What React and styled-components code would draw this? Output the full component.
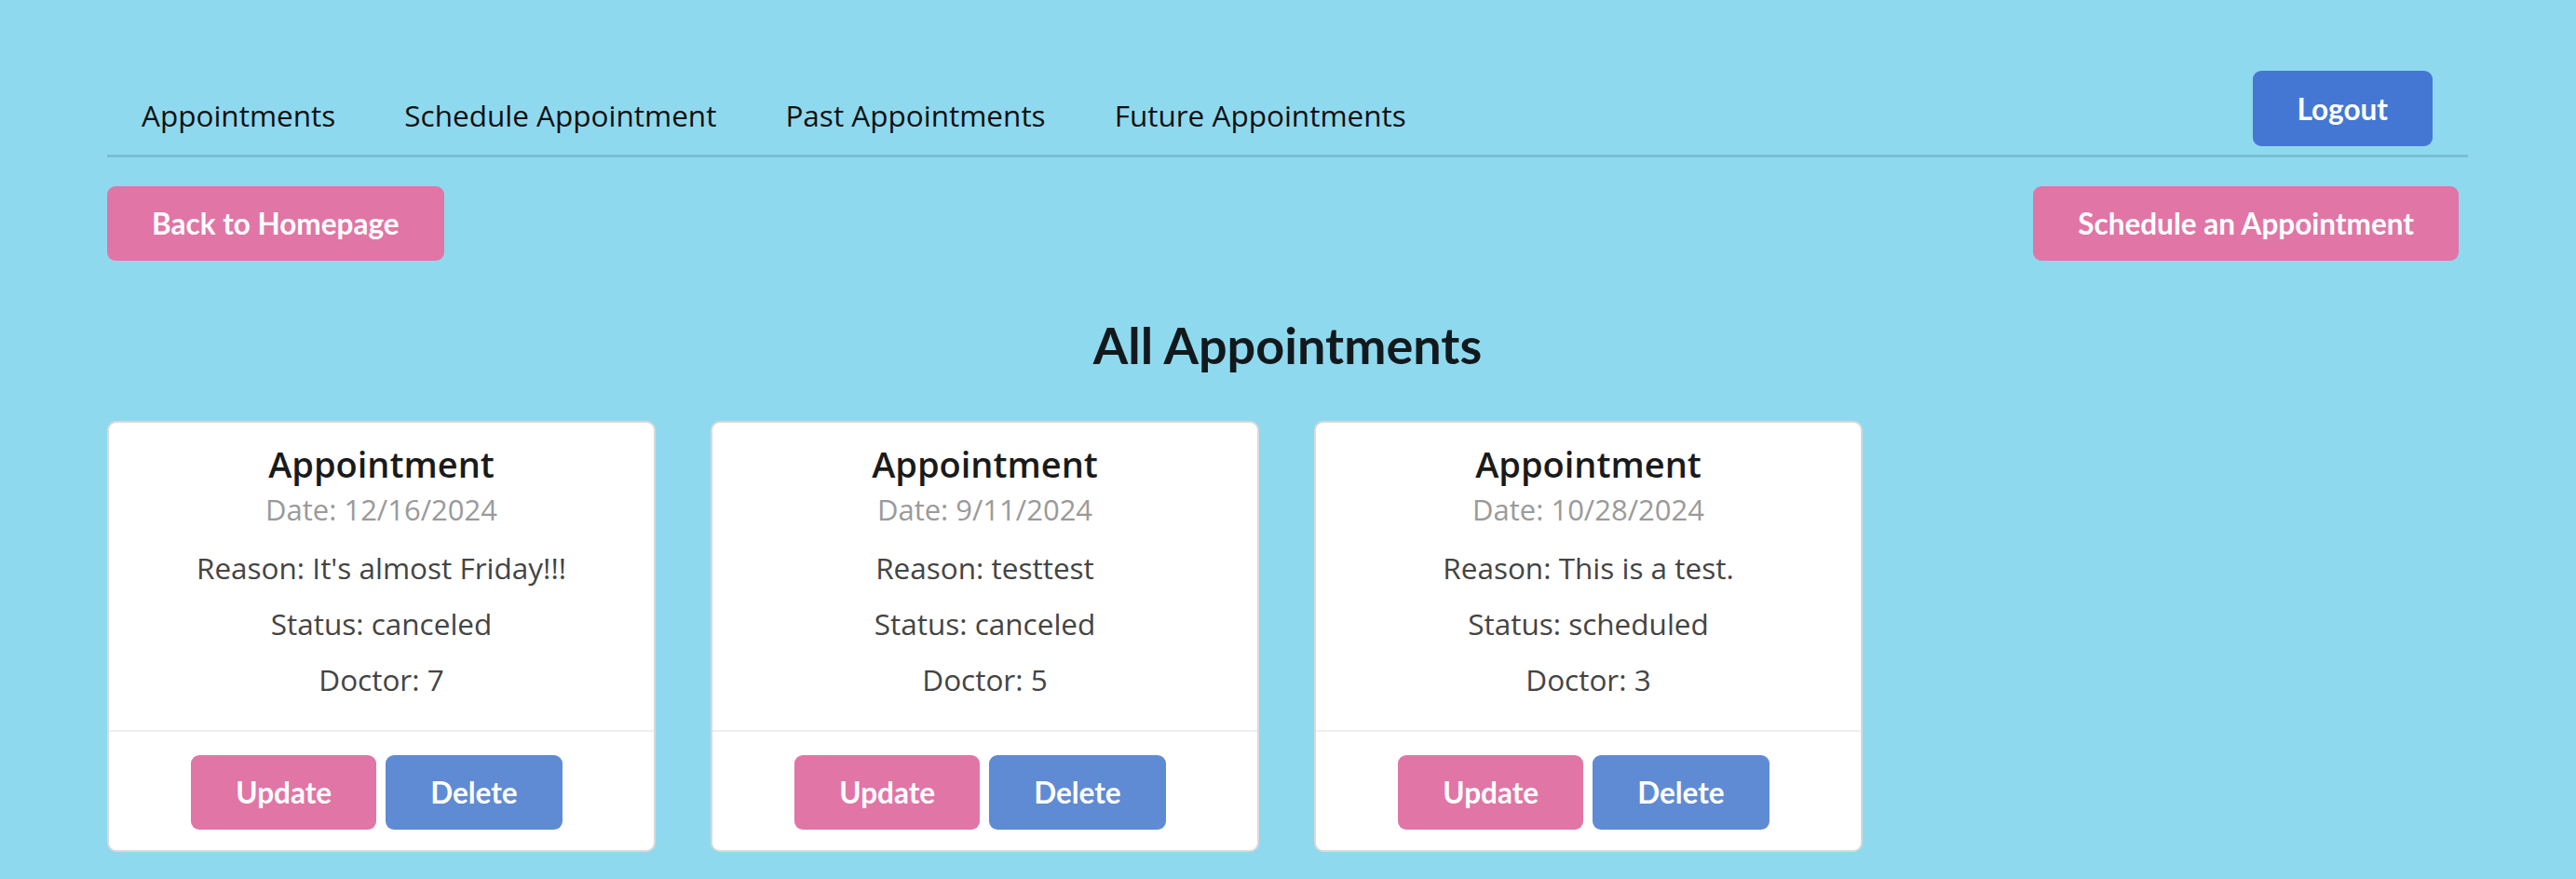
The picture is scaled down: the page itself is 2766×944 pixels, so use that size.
import React from "react";
import styled, { createGlobalStyle } from "styled-components";

const GlobalStyle = createGlobalStyle`
  html, body {
    margin: 0;
    padding: 0;
    background: #8fd9ef;
  }
  body {
    font-family: "Open Sans", "Noto Sans", sans-serif;
    color: #111;
  }
`;

const Page = styled.div`
  min-height: 944px;
  padding: 76px 116px 0 115px;
  box-sizing: border-box;
`;

const NavBar = styled.nav`
  display: flex;
  align-items: flex-end;
  justify-content: space-between;
  padding-bottom: 9px;
  border-bottom: 3px solid #78bed4;
`;

const NavLinks = styled.div`
  display: flex;
  align-items: flex-end;
`;

const NavLink = styled.a`
  font-size: 31.5px;
  line-height: 47px;
  padding: 0 37px 10px;
  color: #111;
  text-decoration: none;
  cursor: pointer;
`;

const Button = styled.button`
  height: 80px;
  padding: 0 48px;
  border: none;
  border-radius: 9px;
  font-family: "Lato", sans-serif;
  font-weight: 700;
  font-size: 31.5px;
  color: #fff;
  cursor: pointer;
  background: ${(p) =>
    p.$variant === "blue" ? "#4477d4" : p.$variant === "soft" ? "#5f8bd4" : "#e175a6"};
`;

const LogoutButton = styled(Button)`
  margin-right: 38px;
  height: 81px;
`;

const ActionRow = styled.div`
  display: flex;
  justify-content: space-between;
  margin-top: 31px;
  padding-right: 10px;
`;

const Heading = styled.h1`
  margin: 59px 0 0;
  font-family: "Lato", sans-serif;
  font-weight: 700;
  font-size: 54px;
  line-height: 1.2;
  text-align: center;
  color: #12191c;
`;

const CardList = styled.div`
  display: flex;
  gap: 59px;
  margin-top: 48px;
`;

const Card = styled.div`
  width: 589px;
  box-sizing: border-box;
  background: #fff;
  border: 2px solid #d9d9d9;
  border-radius: 10px;
  text-align: center;
`;

const CardBody = styled.div`
  padding: 18px 16px 31px;
  border-bottom: 2px solid #eeeeee;
`;

const CardTitle = styled.h2`
  margin: 0;
  font-family: "Open Sans", sans-serif;
  font-weight: 600;
  font-size: 38px;
  line-height: 52px;
  color: #1a1a1a;
`;

const DateLine = styled.div`
  font-size: 31px;
  line-height: 47px;
  color: #9a9a9a;
`;

const Details = styled.div`
  display: flex;
  flex-direction: column;
  gap: 13px;
  margin-top: 15px;
`;

const Detail = styled.p`
  margin: 0;
  font-size: 31.5px;
  line-height: 47px;
  color: #444;
`;

const CardFooter = styled.div`
  display: flex;
  justify-content: center;
  gap: 10px;
  padding: 25px 10px 22px 0;
`;

const appointments = [
  { date: "12/16/2024", reason: "It's almost Friday!!!", status: "canceled", doctor: 7 },
  { date: "9/11/2024", reason: "testtest", status: "canceled", doctor: 5 },
  { date: "10/28/2024", reason: "This is a test.", status: "scheduled", doctor: 3 },
];

const App = () => {
  return (
    <>
      <GlobalStyle />
      <Page>
        <NavBar>
          <NavLinks>
            <NavLink>Appointments</NavLink>
            <NavLink>Schedule Appointment</NavLink>
            <NavLink>Past Appointments</NavLink>
            <NavLink>Future Appointments</NavLink>
          </NavLinks>
          <LogoutButton $variant="blue">Logout</LogoutButton>
        </NavBar>

        <ActionRow>
          <Button>Back to Homepage</Button>
          <Button>Schedule an Appointment</Button>
        </ActionRow>

        <Heading>All Appointments</Heading>

        <CardList>
          {appointments.map((a) => (
            <Card key={a.date}>
              <CardBody>
                <CardTitle>Appointment</CardTitle>
                <DateLine>Date: {a.date}</DateLine>
                <Details>
                  <Detail>Reason: {a.reason}</Detail>
                  <Detail>Status: {a.status}</Detail>
                  <Detail>Doctor: {a.doctor}</Detail>
                </Details>
              </CardBody>
              <CardFooter>
                <Button>Update</Button>
                <Button $variant="soft">Delete</Button>
              </CardFooter>
            </Card>
          ))}
        </CardList>
      </Page>
    </>
  );
};

export default App;
